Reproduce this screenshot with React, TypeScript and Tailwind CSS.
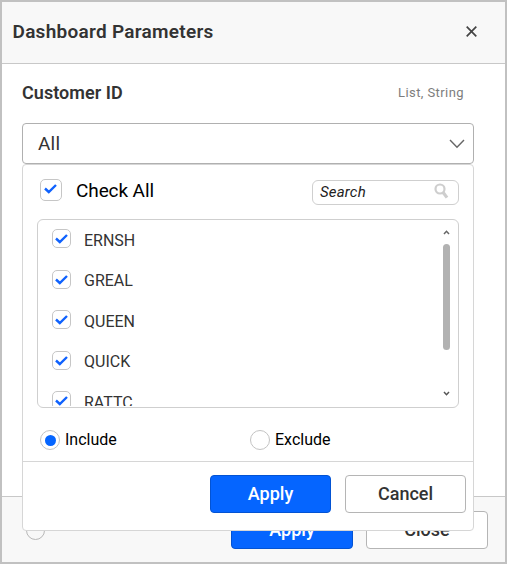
import React from "react";

const rows = ["ERNSH", "GREAL", "QUEEN", "QUICK", "RATTC"];

function Tick({ className }: { className: string }) {
  return (
    <span className={`shrink-0 border border-[#c6c6c6] bg-white ${className}`}>
      <svg width="13" height="10" viewBox="0 0 13 10" fill="none">
        <path d="M1 4.5 L4.8 8 L12 1" stroke="#0f62fe" strokeWidth="2.4" />
      </svg>
    </span>
  );
}

function Radio({ label, checked }: { label: string; checked?: boolean }) {
  return (
    <div className="flex w-[210px] items-center">
      <span className="flex size-5 items-center justify-center rounded-full border border-[#c3c3c3]">
        {checked && <span className="size-[11px] rounded-full bg-[#0565ff]" />}
      </span>
      <span className="ml-[5px] text-[16px] leading-5 text-black">{label}</span>
    </div>
  );
}

function Button({ label, primary, wide }: { label: string; primary?: boolean; wide?: boolean }) {
  return (
    <button
      className={`h-[38px] rounded-[4px] border text-[18px] font-medium leading-[36px] ${
        wide ? "w-[122px]" : "w-[121px]"
      } ${primary ? "border-[#0353d3] bg-[#0565ff] text-white" : "border-[#b5b5b5] bg-white text-[#333]"}`}
    >
      {label}
    </button>
  );
}

function ParameterPopup() {
  return (
    <div className="absolute -left-px top-[40px] z-10 flex h-[367px] w-[452px] flex-col rounded-[4px] border border-[#d6d6d6] bg-white">
      <div className="flex h-[54px] items-start justify-between pl-[17px] pr-[14px]">
        <div className="flex items-start pt-[14px]">
          <Tick className="size-[22px] rounded-[5px] pl-[3px] pt-[4px]" />
          <span className="ml-[14px] text-[19px] leading-[23px] tracking-[-0.1px] text-black">Check All</span>
        </div>
        <div className="mt-[15px] flex h-[25px] w-[147px] items-center justify-between rounded-[6px] border border-[#cfcfcf] pl-[7px] pr-[9px]">
          <span className="pb-px text-[15px] italic leading-[22px] tracking-[0.2px] text-[#222]">Search</span>
          <svg className="mb-[3px]" width="15" height="16" viewBox="0 0 15 16" fill="none" stroke="#cecece">
            <circle cx="6" cy="6" r="4.5" strokeWidth="2.2" />
            <path d="M8.8 9 L13 14.6" strokeWidth="3.2" />
          </svg>
        </div>
      </div>
      <div className="mx-[14px] flex h-[189px] justify-between overflow-hidden rounded-[6px] border border-[#cfcfcf] pb-[2px] pl-[14px] pr-[7px]">
        <div className="flex h-[186px] flex-col overflow-hidden pt-[9px]">
          {rows.map((row) => (
            <div key={row} className="flex h-[40.5px] shrink-0 items-start">
              <Tick className="size-[19px] rounded-[5px] pl-[2px] pt-[4px]" />
              <span className="ml-[13px] mt-[1.6px] text-[16px] leading-[20px] text-[#333]">{row}</span>
            </div>
          ))}
        </div>
        <div className="flex w-[9px] flex-col items-center pt-[10px]">
          <svg width="7" height="5" viewBox="0 0 7 5" fill="none" stroke="#666" strokeWidth="1.5">
            <path d="M1 4 L3.5 1.3 L6 4" />
          </svg>
          <span className="mt-[9px] h-[106px] w-[7px] rounded-full bg-[#b2b2b2]" />
          <svg className="mt-[41px]" width="7" height="5" viewBox="0 0 7 5" fill="none" stroke="#555" strokeWidth="1.5">
            <path d="M1 1 L3.5 3.7 L6 1" />
          </svg>
        </div>
      </div>
      <div className="flex h-[54px] shrink-0 border-b border-[#d6d6d6] pb-[11px] pl-[17px] pt-[22px]">
        <Radio label="Include" checked />
        <Radio label="Exclude" />
      </div>
      <div className="flex justify-end gap-[14px] pr-[7px] pt-[13px]">
        <Button label="Apply" primary />
        <Button label="Cancel" />
      </div>
    </div>
  );
}

export default function App() {
  return (
    <div className="flex h-[564px] w-[507px] flex-col border-2 border-[#c1c1c1] bg-white font-['Roboto',sans-serif]">
      <header className="flex h-[62px] shrink-0 items-center justify-between border-b border-[#c8c8c8] bg-[#f8f8f8] pl-[10.5px] pr-[28px]">
        <h1 className="pb-[2px] text-[19px] font-semibold leading-6 tracking-[0.27px] text-[#333]">Dashboard Parameters</h1>
        <svg className="mb-[3px]" width="11" height="11" viewBox="0 0 11 11" stroke="#444" strokeWidth="1.7">
          <path d="M.7 .7 L10.3 10.3 M10.3 .7 L.7 10.3" />
        </svg>
      </header>
      <main className="flex h-[432px] shrink-0 flex-col pl-5 pr-[31px] pt-[17px]">
        <div className="flex h-6 items-center justify-between pr-[10px]">
          <h2 className="text-[18px] font-semibold leading-6 tracking-[0.05px] text-[#333]">Customer ID</h2>
          <span className="text-[13px] leading-5 tracking-[0.42px] text-[#7d7d7d]">List, String</span>
        </div>
        <div className="relative mt-[18px] flex h-[41px] w-[452px] items-center justify-between rounded-[4px] border border-[#b0b0b0] pl-[15px] pr-2">
          <span className="text-[19px] leading-6 tracking-[0.2px] text-[#333]">All</span>
          <svg width="16" height="10" viewBox="0 0 16 10" fill="none" stroke="#666" strokeWidth="1.4">
            <path d="M1 1 L8 8.3 L15 1" />
          </svg>
          <ParameterPopup />
        </div>
      </main>
      <footer className="flex flex-1 items-start justify-between border-t border-[#c8c8c8] bg-[#f8f8f8] pl-[24px] pr-[17px] pt-[14px]">
        <span className="mt-[10px] size-[19px] rounded-full border border-[#b8b8b8]" />
        <div className="flex gap-[13px]">
          <Button label="Apply" primary wide />
          <Button label="Close" wide />
        </div>
      </footer>
    </div>
  );
}
